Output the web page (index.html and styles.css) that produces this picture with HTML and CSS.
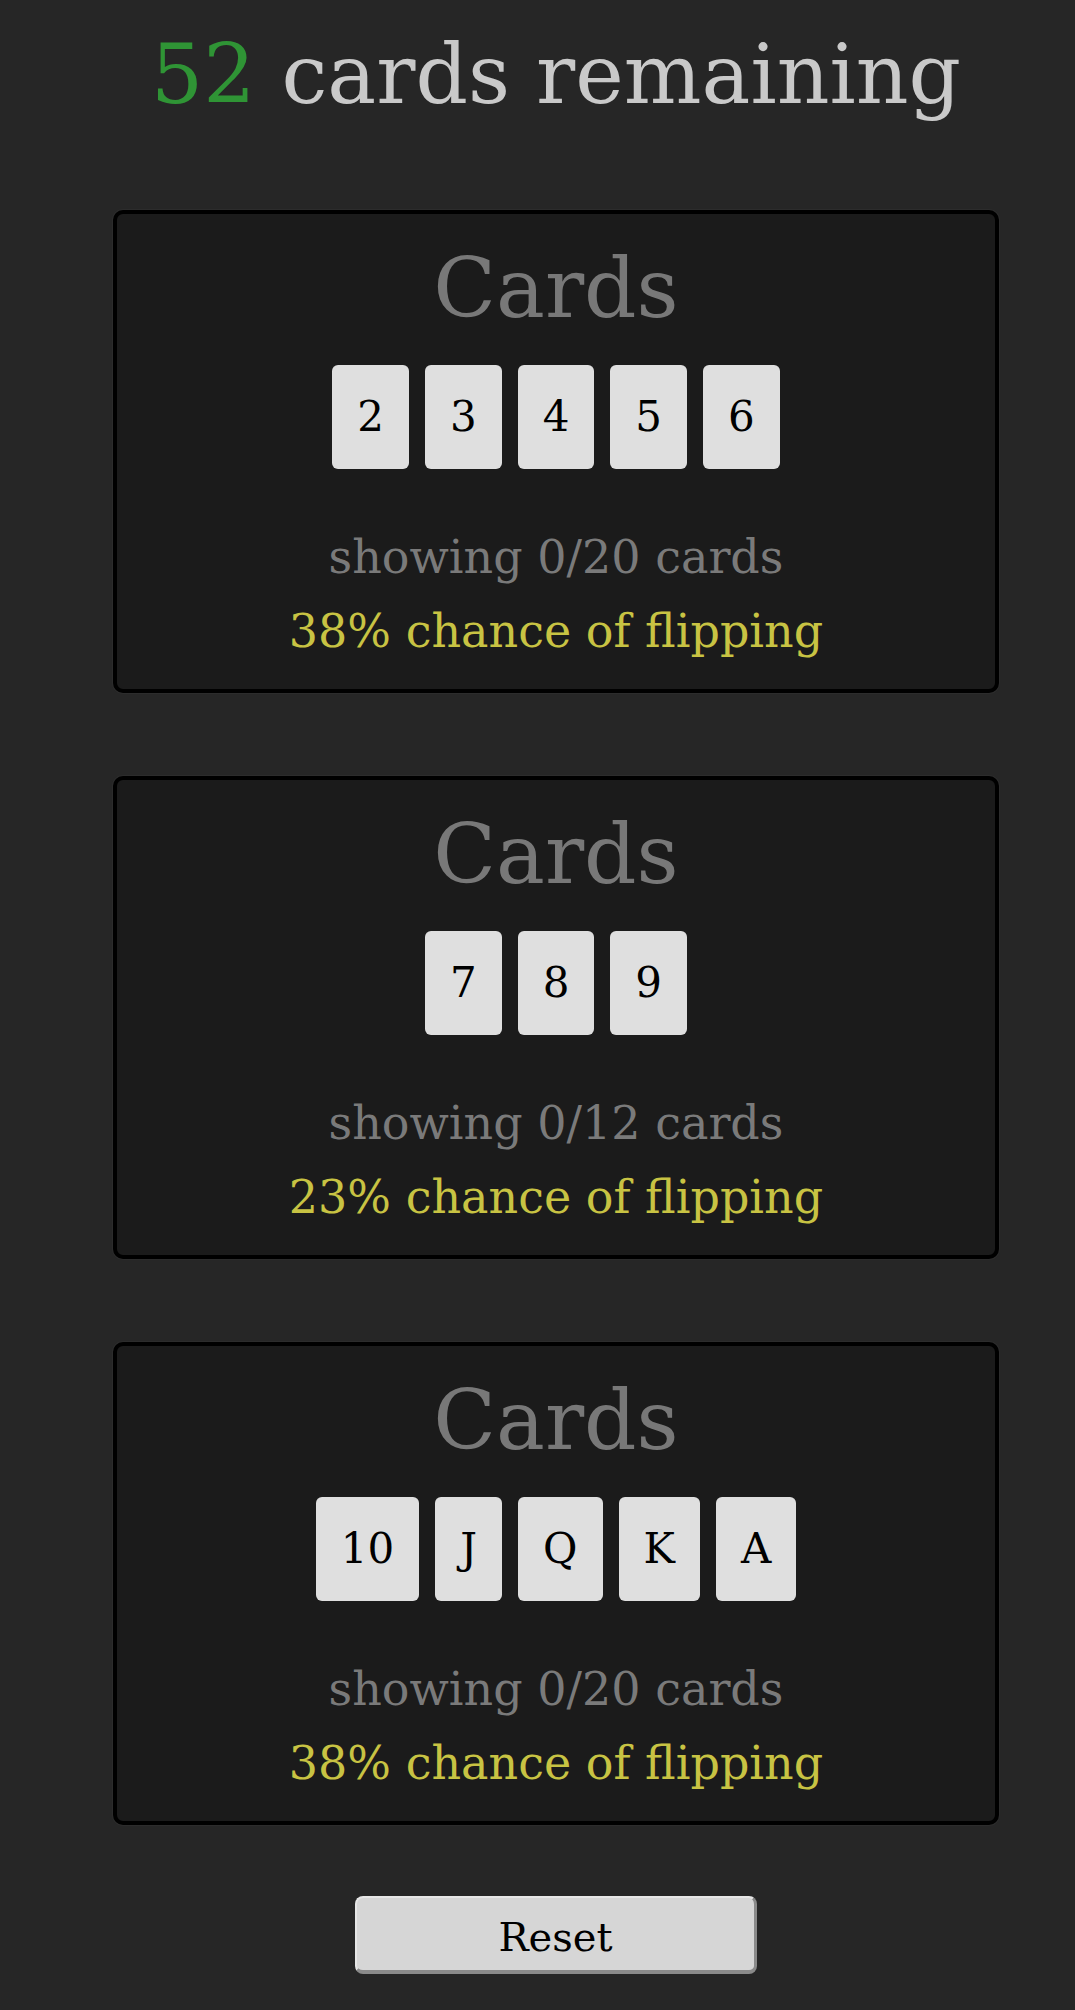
FILE: index.html
```html
<!DOCTYPE html>
<html lang="en">
<head>
<meta charset="utf-8">
<title>Cards remaining</title>
<link rel="stylesheet" href="styles.css">
</head>
<body>
<main class="page">
  <h1 class="title"><span class="count">52</span> cards remaining</h1>

  <section class="group">
    <h2 class="group-title">Cards</h2>
    <div class="tiles">
      <div class="tile">2</div>
      <div class="tile">3</div>
      <div class="tile">4</div>
      <div class="tile">5</div>
      <div class="tile">6</div>
    </div>
    <p class="showing">showing 0/20 cards</p>
    <p class="chance">38% chance of flipping</p>
  </section>

  <section class="group">
    <h2 class="group-title">Cards</h2>
    <div class="tiles">
      <div class="tile">7</div>
      <div class="tile">8</div>
      <div class="tile">9</div>
    </div>
    <p class="showing">showing 0/12 cards</p>
    <p class="chance">23% chance of flipping</p>
  </section>

  <section class="group">
    <h2 class="group-title">Cards</h2>
    <div class="tiles">
      <div class="tile">10</div>
      <div class="tile">J</div>
      <div class="tile">Q</div>
      <div class="tile">K</div>
      <div class="tile">A</div>
    </div>
    <p class="showing">showing 0/20 cards</p>
    <p class="chance">38% chance of flipping</p>
  </section>

  <div class="actions">
    <button class="reset" type="button">Reset</button>
  </div>
</main>
</body>
</html>
```
FILE: styles.css
```css
html, body {
  margin: 0;
  padding: 0;
  background: #262626;
}

body {
  font-family: "DejaVu Serif", "Liberation Serif", serif;
  color: #c8c8c8;
}

.page {
  width: 886px;
  margin-left: 113px;
  padding-top: 25px;
  padding-bottom: 37px;
}

.title {
  margin: 0;
  font-size: 82px;
  line-height: 100px;
  font-weight: normal;
  text-align: center;
  color: #c9c9c9;
  white-space: nowrap;
}

.count {
  color: #2f9435;
}

.group {
  margin-top: 85px;
  border: 4px solid #000;
  border-radius: 10px;
  background: #1b1b1b;
  padding: 25px 0 21px;
  text-align: center;
  box-shadow: 0 0 0 1px #2c2c2c;
}

.group + .group {
  margin-top: 83px;
}

.group-title {
  margin: 0;
  font-size: 82px;
  line-height: 100px;
  font-weight: normal;
  color: #787878;
}

.tiles {
  margin-top: 26px;
  display: flex;
  justify-content: center;
  gap: 16px;
}

.tile {
  background: #dfdfdf;
  color: #000;
  border-radius: 6px;
  font-size: 42px;
  line-height: 52px;
  padding: 26px 25px;
}

.showing,
.chance {
  margin: 0;
  font-size: 46px;
  line-height: 74px;
}

.showing {
  margin-top: 51px;
  color: #7a7a7a;
}

.chance {
  color: #c8c343;
}

.actions {
  margin-top: 71px;
  display: flex;
  justify-content: center;
}

.reset {
  width: 402px;
  font-family: "DejaVu Serif", "Liberation Serif", serif;
  font-size: 40px;
  line-height: 48px;
  color: #000;
  background: #d6d6d6;
  border-style: solid;
  border-width: 2px 3px 4px 2px;
  border-color: #e6e6e6 #8a8a8a #8a8a8a #e6e6e6;
  border-radius: 8px;
  padding: 15px 0 9px;
}
```
